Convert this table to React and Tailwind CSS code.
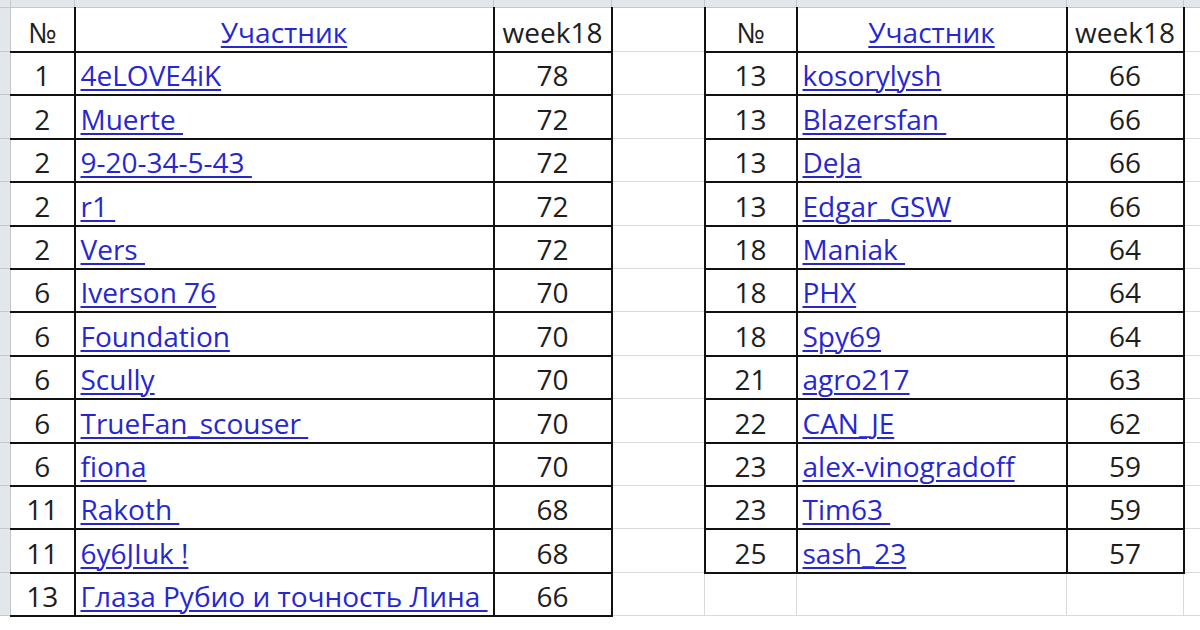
import React from 'react';

const leftRows = [
  ['1', '4eLOVE4iK', '78'],
  ['2', 'Muerte ', '72'],
  ['2', '9-20-34-5-43 ', '72'],
  ['2', 'r1 ', '72'],
  ['2', 'Vers ', '72'],
  ['6', 'Iverson 76', '70'],
  ['6', 'Foundation', '70'],
  ['6', 'Scully', '70'],
  ['6', 'TrueFan_scouser ', '70'],
  ['6', 'fiona', '70'],
  ['11', 'Rakoth ', '68'],
  ['11', '6y6JIuk !', '68'],
  ['13', 'Глаза Рубио и точность Лина ', '66'],
];

const rightRows = [
  ['13', 'kosorylysh', '66'],
  ['13', 'Blazersfan ', '66'],
  ['13', 'DeJa', '66'],
  ['13', 'Edgar_GSW', '66'],
  ['18', 'Maniak ', '64'],
  ['18', 'PHX', '64'],
  ['18', 'Spy69', '64'],
  ['21', 'agro217', '63'],
  ['22', 'CAN_JE', '62'],
  ['23', 'alex-vinogradoff', '59'],
  ['23', 'Tim63 ', '59'],
  ['25', 'sash_23', '57'],
];

// row heights alternate so the lines fall on the screenshot's 43.6px pitch
const rowHeights = [
  'h-[44px]', 'h-[43px]', 'h-[44px]', 'h-[43px]', 'h-[44px]', 'h-[43px]', 'h-[43px]',
  'h-[44px]', 'h-[43px]', 'h-[44px]', 'h-[43px]', 'h-[43px]', 'h-[44px]', 'h-[43px]',
];

// plain grid cell, and the black-bordered cells of the two tables
const grid = 'border border-[#d9dadc] p-0';
const boxed = 'border-2 border-[#111] p-0';
const numCell = 'text-center align-bottom pb-[5px] text-[#1e1e1e]';
const nameCell = 'text-left align-bottom pb-[5px] pl-[5px] whitespace-pre';
const link = 'text-[#2727d2] underline decoration-2 underline-offset-[3px]';

function TableCells({ row, header, leftEdge }) {
  if (!row) {
    return (
      <>
        <td className={grid}></td>
        <td className={grid}></td>
        <td className={grid}></td>
      </>
    );
  }
  const first = leftEdge ? `${boxed} border-l border-l-[#c3c7cc]` : boxed;
  const top = header ? ' border-t border-t-[#c3c7cc]' : '';
  return (
    <>
      <td className={`${first}${top} ${numCell}`}>{row[0]}</td>
      <td className={`${boxed}${top} ${header ? 'text-center align-bottom pb-[5px]' : nameCell}`}>
        <span className={link}>{row[1]}</span>
      </td>
      <td className={`${boxed}${top} ${numCell}`}>{row[2]}</td>
    </>
  );
}

export default function App() {
  const header = ['№', 'Участник', 'week18'];
  const rows = [];
  for (let i = 0; i < 14; i++) {
    const l = i === 0 ? header : leftRows[i - 1];
    const r = i === 0 ? header : rightRows[i - 1];
    rows.push(
      <tr key={i} className={rowHeights[i]}>
        <td className="bg-[#e3e6ea] border border-[#c3c7cc] p-0"></td>
        <TableCells row={l} header={i === 0} leftEdge />
        <td className={grid}></td>
        <TableCells row={r} header={i === 0} />
        <td className={grid}></td>
      </tr>
    );
  }

  return (
    <div
      className="w-[1200px] h-[630px] overflow-hidden bg-white text-[28px] leading-none"
      style={{ fontFamily: '"Open Sans", "Noto Sans", sans-serif' }}
    >
      <table className="table-fixed border-collapse w-[1210px] -mt-[1px] -ml-[1px]">
        <colgroup>
          <col className="w-[11px]" />
          <col className="w-[64px]" />
          <col className="w-[419px]" />
          <col className="w-[118px]" />
          <col className="w-[93px]" />
          <col className="w-[92px]" />
          <col className="w-[270px]" />
          <col className="w-[117px]" />
          <col className="w-[26px]" />
        </colgroup>
        <tbody>
          <tr className="h-[8px]">
            {Array.from({ length: 9 }).map((_, k) => (
              <td key={k} className="bg-[#e3e6ea] border border-[#c3c7cc] p-0"></td>
            ))}
          </tr>
          {rows}
        </tbody>
      </table>
    </div>
  );
}
